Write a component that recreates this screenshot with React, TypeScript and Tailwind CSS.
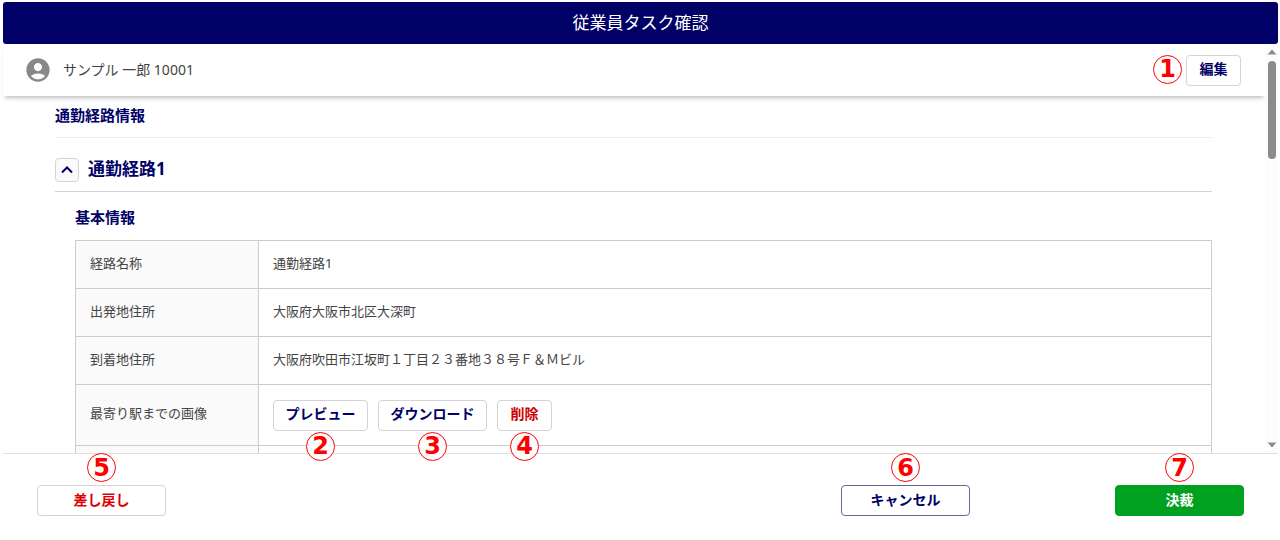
import React, { useState } from 'react';
import { MdAccountCircle } from 'react-icons/md';
import clsx from 'clsx';

const routeRows = [
    { label: '経路名称', value: '通勤経路1' },
    { label: '出発地住所', value: '大阪府大阪市北区大深町' },
    { label: '到着地住所', value: '大阪府吹田市江坂町１丁目２３番地３８号Ｆ＆Ｍビル' },
];

const Marker = ({ no, className }: { no: number; className: string }) => (
    <span
        className={clsx(
            "absolute z-20 flex h-[29px] w-[29px] items-center justify-center rounded-full border border-[#ff0000] bg-white font-['DejaVu_Sans',sans-serif] text-2xl leading-none font-bold text-[#ff0000]",
            className
        )}
    >
        {no}
    </span>
);

type ActionProps = {
    no: number;
    className: string;
    markerClassName: string;
    children: React.ReactNode;
};

const Action = ({ no, className, markerClassName, children }: ActionProps) => (
    <div className="relative">
        <button
            type="button"
            className={clsx('block h-[31px] rounded border pb-[2px] text-sm leading-5 font-bold whitespace-nowrap', className)}
        >
            {children}
        </button>
        <Marker no={no} className={markerClassName} />
    </div>
);

const ScrollBar = () => (
    <div className="flex w-[13px] shrink-0 flex-col items-center bg-[#fcfcfc] pt-[5px] pb-[5px]">
        <svg viewBox="0 0 10 6" className="h-[6px] w-[10px] fill-[#8b8b8b]">
            <path d="M5 0.5 9.5 5.5H0.5Z" />
        </svg>
        <div className="mt-[6px] h-[98px] w-2 rounded-full bg-[#8b8b8b]" />
        <svg viewBox="0 0 10 6" className="mt-auto h-[6px] w-[10px] fill-[#8b8b8b]">
            <path d="M5 5.5 9.5 0.5H0.5Z" />
        </svg>
    </div>
);

export default function App() {
    const [open, setOpen] = useState(true);

    return (
        <div className="flex h-screen flex-col overflow-hidden bg-white pt-[2px] pr-[2px] pl-[3px] font-['Noto_Sans','Noto_Sans_CJK_JP',sans-serif] text-[#444444]">
            <header className="flex h-[42px] shrink-0 items-center justify-center rounded-[3px] bg-[#000066]">
                <h1 className="text-[17px] leading-6 text-white">従業員タスク確認</h1>
            </header>

            <div className="flex min-h-0 flex-1">
                <main className="min-w-0 flex-1">
                    <div className="flex h-[52px] items-center justify-between pr-6 pl-[21px] shadow-[0_4px_4px_-2px_rgba(0,0,0,0.25)]">
                        <div className="flex items-center gap-[11px]">
                            <MdAccountCircle className="h-7 w-7 text-[#888888]" />
                            <span className="text-sm leading-5">サンプル 一郎 10001</span>
                        </div>
                        <Action no={1} className="w-[55px] border-[#d4d4d4] text-[#000066]" markerClassName="top-0 -left-[33px]">
                            編集
                        </Action>
                    </div>

                    <section className="pr-[53px] pl-[52px]">
                        <h2 className="border-b border-[#eeeeee] pt-[7px] pb-[10px] text-[15px] leading-6 font-bold text-[#000066]">
                            通勤経路情報
                        </h2>
                        <div className="flex h-[54px] items-center gap-[9px] border-b border-[#d4d4d4] pt-[10px]">
                            <button
                                type="button"
                                aria-label="通勤経路1を開閉"
                                aria-expanded={open}
                                onClick={() => setOpen(!open)}
                                className="flex h-6 w-6 items-center justify-center rounded border border-[#d4d4d4] bg-[#fafafa]"
                            >
                                <svg
                                    viewBox="0 0 12 8"
                                    className={clsx('h-2 w-3 fill-none stroke-[#000066] stroke-2', !open && 'rotate-180')}
                                >
                                    <path d="M1 6.5 6 1.5 11 6.5" />
                                </svg>
                            </button>
                            <h3 className="pb-[2px] text-[17px] leading-6 font-bold text-[#000066]">通勤経路1</h3>
                        </div>

                        {open && (
                            <div className="pt-[13px] pl-5">
                                <h4 className="mb-[11px] text-[15px] leading-6 font-bold text-[#000066]">基本情報</h4>
                                <table className="w-full table-fixed border-collapse text-[13px] leading-5">
                                    <tbody>
                                        {routeRows.map((row) => (
                                            <tr key={row.label} className="h-12">
                                                <th
                                                    scope="row"
                                                    className="w-[183px] border border-[#cccccc] bg-[#fafafa] px-[14px] pb-1 text-left font-normal"
                                                >
                                                    {row.label}
                                                </th>
                                                <td className="border border-[#cccccc] px-[14px] pb-1">{row.value}</td>
                                            </tr>
                                        ))}
                                        <tr className="h-[61px]">
                                            <th
                                                scope="row"
                                                className="border border-[#cccccc] bg-[#fafafa] px-[14px] pb-1 text-left font-normal"
                                            >
                                                最寄り駅までの画像
                                            </th>
                                            <td className="border border-[#cccccc] px-[14px]">
                                                <div className="flex gap-[10px]">
                                                    <Action
                                                        no={2}
                                                        className="w-[95px] border-[#d4d4d4] text-[#000066]"
                                                        markerClassName="top-8 left-[33px]"
                                                    >
                                                        プレビュー
                                                    </Action>
                                                    <Action
                                                        no={3}
                                                        className="w-[109px] border-[#d4d4d4] text-[#000066]"
                                                        markerClassName="top-8 left-10"
                                                    >
                                                        ダウンロード
                                                    </Action>
                                                    <Action
                                                        no={4}
                                                        className="w-[55px] border-[#d4d4d4] text-[#cc0000]"
                                                        markerClassName="top-8 left-[13px]"
                                                    >
                                                        削除
                                                    </Action>
                                                </div>
                                            </td>
                                        </tr>
                                        <tr className="h-12">
                                            <th className="border border-[#cccccc] bg-[#fafafa]"></th>
                                            <td className="border border-[#cccccc]"></td>
                                        </tr>
                                    </tbody>
                                </table>
                            </div>
                        )}
                    </section>
                </main>
                <ScrollBar />
            </div>

            <footer className="relative z-10 flex h-[87px] shrink-0 items-start justify-between border-t border-[#e0e0e0] bg-white px-[34px] pt-[31px]">
                <Action no={5} className="w-[129px] border-[#d4d4d4] text-[#dd0000]" markerClassName="-top-8 left-[50px]">
                    差し戻し
                </Action>
                <div className="flex gap-[145px]">
                    <Action no={6} className="w-[129px] border-[#66669f] text-[#000066]" markerClassName="-top-8 left-[50px]">
                        キャンセル
                    </Action>
                    <Action no={7} className="w-[129px] border-[#00a020] bg-[#00a020] text-white" markerClassName="-top-8 left-[50px]">
                        決裁
                    </Action>
                </div>
            </footer>
        </div>
    );
}
